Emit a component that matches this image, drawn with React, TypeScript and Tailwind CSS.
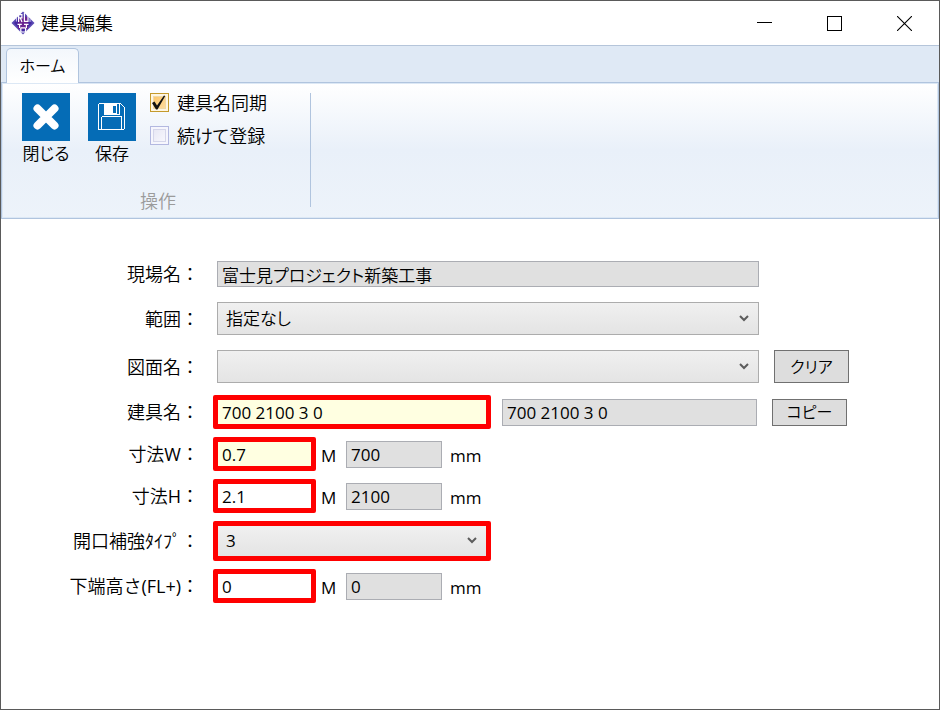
import React, { useState } from "react";

function AppLogo() {
  return (
    <svg width="24" height="24" viewBox="0 0 24 24" aria-hidden="true">
      <path d="M12 0.500 23.500 12 12 23.500 0.500 12Z" fill="#5a4ab4" />
      <path d="M12 3 21 12 12 21 3 12Z" fill="#4527a0" />
      <path d="M7 6h10v12H7z" fill="#6a2390" />
      <g stroke="#ffffff" strokeWidth="1.200" fill="none">
        <path d="M7.600 11V3.600h3.300v3.200H7.600M9.200 6.800 11 11" />
        <path d="M13.400 2v8.400h3.600V4" />
        <path d="M6.500 13.400h4.300M13 13.400h4.500" />
        <path d="M8.600 13.400v3.600M15.400 13.400v3.600" />
        <path d="M9.800 16.800h4.800M9.800 16.800v4.200h4.800v-4.200" />
      </g>
      <path d="M5.500 7v3.500M19 7.500V11" stroke="#c9c1ea" />
    </svg>
  );
}

function TitleBar() {
  const control = "flex h-full w-[70px] items-center justify-center";
  return (
    <header className="flex h-[45px] items-center justify-between border-b border-[#b5c5da] bg-white">
      <div className="flex items-center gap-[6px] pl-[10px]">
        <AppLogo />
        <h1 className="text-[18px] leading-6">建具編集</h1>
      </div>
      <div className="flex h-full">
        <button type="button" aria-label="最小化" className={control}>
          <svg width="15" height="15" viewBox="0 0 15 15" shapeRendering="crispEdges">
            <path d="M0 6.500h15" stroke="#000" />
          </svg>
        </button>
        <button type="button" aria-label="最大化" className={control}>
          <svg width="15" height="15" viewBox="0 0 15 15" shapeRendering="crispEdges">
            <rect x="0.5" y="0.5" width="14" height="14" fill="none" stroke="#000" />
          </svg>
        </button>
        <button type="button" aria-label="ウィンドウを閉じる" className={control}>
          <svg width="15" height="15" viewBox="0 0 15 15">
            <path d="M0 0 15 15M15 0 0 15" stroke="#000" strokeWidth="1.1" />
          </svg>
        </button>
      </div>
    </header>
  );
}

function RibbonButton({ label, children }: { label: string; children: React.ReactNode }) {
  return (
    <button type="button" className="flex w-12 flex-col items-center">
      <span className="flex size-12 items-center justify-center bg-[#056cb6]">{children}</span>
      <span className="text-[17px] leading-[26px] whitespace-nowrap [font-feature-settings:'palt']">
        {label}
      </span>
    </button>
  );
}

function RibbonCheck({ label, initial }: { label: string; initial: boolean }) {
  const [on, setOn] = useState(initial);
  return (
    <label className="flex h-[19px] items-center gap-2">
      <span className="grid">
        <input
          type="checkbox"
          checked={on}
          onChange={(e) => setOn(e.target.checked)}
          className="col-start-1 row-start-1 size-[19px] appearance-none border border-[#b3b8e0] bg-linear-to-br from-[#e4e4f2] to-[#fbfbff] shadow-[inset_0_0_0_2px_#f6f6fd,inset_0_0_0_3px_#d5d6ea] checked:border-[#c49a2c] checked:from-[#fbc25e] checked:to-[#fee0a8] checked:shadow-[inset_0_0_0_2px_#fff6e2,inset_0_0_0_3px_#f0d9a6]"
        />
        {on && (
          <svg
            width="19"
            height="19"
            viewBox="0 0 19 19"
            className="pointer-events-none col-start-1 row-start-1"
          >
            <path d="M2 10 4.500 8.500 7 12.500 14 2.500 15.200 3 7.500 16.500H6Z" fill="#111" />
          </svg>
        )}
      </span>
      <span className="text-[18px] leading-4 whitespace-nowrap [font-feature-settings:'palt']">
        {label}
      </span>
    </label>
  );
}

function Ribbon() {
  return (
    <div>
      <nav className="flex h-[36px] items-end bg-[#dfe9f5] pl-[5px]">
        <button
          type="button"
          className="z-10 -mb-px h-[35px] w-[73px] rounded-t-[5px] border border-b-0 border-[#b0c4de] bg-linear-to-b from-[#f3f7fc] to-white text-[16px] leading-6 [font-feature-settings:'palt']"
        >
          ホーム
        </button>
      </nav>
      <section className="flex h-[137px] border border-[#b0c4de] bg-linear-to-b from-white via-[#e9f0f9] via-50% to-[#edf3fa] pt-[10px] pl-5 shadow-[inset_0_0_0_1px_#dce8f5]">
        <div className="flex h-[114px] w-[289px] flex-col justify-between border-r border-[#b0c4de]">
          <div className="flex">
            <div className="flex gap-[18px]">
              <RibbonButton label="閉じる">
                <svg width="26" height="26" viewBox="0 0 26 26">
                  <path
                    d="M4.500 4.500 21.500 21.500M21.500 4.500 4.500 21.500"
                    stroke="#fff"
                    strokeWidth="8"
                    strokeLinecap="round"
                  />
                </svg>
              </RibbonButton>
              <RibbonButton label="保存">
                <svg width="28" height="28" viewBox="0 0 28 28" shapeRendering="crispEdges">
                  <path d="M0.500 1.500 1.500 0.500H22.500L26.500 4.500V25.500L25.500 26.500H0.500Z" fill="none" stroke="#fff" />
                  <path d="M6 1h13v11H6z" fill="#fff" />
                  <path d="M15 3h3v7h-3z" fill="#056cb6" />
                  <path d="M21.500 1v10.500H19" fill="none" stroke="#fff" />
                  <path d="M3.500 26.500V14.500L4.500 13.500H23.500V26.500" fill="none" stroke="#fff" />
                </svg>
              </RibbonButton>
            </div>
            <div className="ml-[14px] flex flex-col gap-[14px]">
              <RibbonCheck label="建具名同期" initial={true} />
              <RibbonCheck label="続けて登録" initial={false} />
            </div>
          </div>
          <p className="pr-4 text-center text-[18px] leading-3 text-[#9b9b9b]">操作</p>
        </div>
      </section>
    </div>
  );
}

const readOnlyBox =
  "min-w-0 border border-[#abadb3] bg-[#e0e0e0] px-1 outline-none";

function Row({ id, label, children }: { id: string; label: string; children: React.ReactNode }) {
  return (
    <div className="flex items-center">
      <label
        htmlFor={id}
        className="w-[198px] shrink-0 text-right text-[18px] leading-6 whitespace-nowrap"
      >
        {label + "\uFF1A"}
      </label>
      {children}
    </div>
  );
}

function Dropdown({ id, options, framed }: { id: string; options: string[]; framed?: boolean }) {
  return (
    <div
      className={
        framed
          ? "ml-[14px] grid h-10 w-full max-w-[278px] items-center rounded-[2px] border-5 border-[#ff0000]"
          : "ml-[18px] grid h-[33px] w-full max-w-[542px] items-center border border-[#acacac]"
      }
    >
      <select
        id={id}
        className="col-start-1 row-start-1 h-full w-full appearance-none bg-linear-to-b from-[#f0f0f0] to-[#e4e4e4] px-2 text-[17px] outline-none [font-feature-settings:'palt']"
      >
        {options.map((o) => (
          <option key={o}>{o}</option>
        ))}
      </select>
      <svg
        width="10"
        height="8"
        viewBox="0 0 10 8"
        className="pointer-events-none col-start-1 row-start-1 mr-[9px] justify-self-end"
      >
        <path d="M1 1 5 5 9 1" fill="none" stroke="#5c5c5c" strokeWidth="2" />
      </svg>
    </div>
  );
}

function PushButton({ children, tall }: { children: React.ReactNode; tall?: boolean }) {
  return (
    <button
      type="button"
      className={`ml-[15px] w-[75px] shrink-0 border border-[#707070] bg-[#dddddd] text-[16px] leading-6 [font-feature-settings:'palt'] ${
        tall ? "h-[33px]" : "h-[27px]"
      }`}
    >
      {children}
    </button>
  );
}

function RedInput({ id, value, yellow, wide }: { id: string; value: string; yellow?: boolean; wide?: boolean }) {
  return (
    <input
      id={id}
      type="text"
      defaultValue={value}
      className={`ml-[14px] h-[34px] rounded-[2px] border-5 border-[#ff0000] px-1 text-[17px] outline-none ${
        wide ? "w-full max-w-[278px]" : "w-[103px]"
      } ${yellow ? "bg-[#ffffe1]" : "bg-white"}`}
    />
  );
}

function SizeRow({ id, label, meters, millis, yellow }: { id: string; label: string; meters: string; millis: string; yellow?: boolean }) {
  return (
    <Row id={id} label={label}>
      <RedInput id={id} value={meters} yellow={yellow} />
      <span className="w-[30px] pt-1 pl-[5px] text-[17px] leading-6">M</span>
      <input
        type="text"
        readOnly
        aria-label={`${label} mm`}
        value={millis}
        className={`${readOnlyBox} h-[27px] w-24 text-[17px]`}
      />
      <span className="pt-1 pl-2 text-[17px] leading-6">mm</span>
    </Row>
  );
}

export default function App() {
  return (
    <div className="flex min-h-screen flex-col border border-[#5a5a5a] bg-white font-['Open_Sans','Noto_Sans_CJK_JP_DemiLight','Noto_Sans_CJK_JP_Light','Noto_Sans_CJK_JP',sans-serif] text-black">
      <TitleBar />
      <Ribbon />
      <main className="flex flex-col gap-3 pt-[42px]">
        <div className="flex flex-col gap-[15px]">
          <Row id="site" label="現場名">
            <input
              id="site"
              type="text"
              readOnly
              value="富士見プロジェクト新築工事"
              className={`${readOnlyBox} ml-[18px] h-[26px] w-full max-w-[542px] text-[17px] [font-feature-settings:'palt']`}
            />
          </Row>
          <Row id="range" label="範囲">
            <Dropdown id="range" options={["指定なし"]} />
          </Row>
          <Row id="drawing" label="図面名">
            <Dropdown id="drawing" options={[""]} />
            <PushButton tall>クリア</PushButton>
          </Row>
        </div>
        <div className="flex flex-col gap-2">
          <Row id="fitting" label="建具名">
            <RedInput id="fitting" value="700 2100 3 0" yellow wide />
            <input
              type="text"
              readOnly
              aria-label="建具名 自動"
              value="700 2100 3 0"
              className={`${readOnlyBox} ml-[11px] h-[27px] w-full max-w-[255px] text-[17px]`}
            />
            <PushButton>コピー</PushButton>
          </Row>
          <SizeRow id="width" label="寸法W" meters="0.7" millis="700" yellow />
          <SizeRow id="height" label="寸法H" meters="2.1" millis="2100" />
          <Row id="reinforce" label={"開口補強\uFF80\uFF72\uFF8C\uFF9F"}>
            <Dropdown id="reinforce" options={["3"]} framed />
          </Row>
          <SizeRow id="bottom" label="下端高さ(FL+)" meters="0" millis="0" />
        </div>
      </main>
    </div>
  );
}
